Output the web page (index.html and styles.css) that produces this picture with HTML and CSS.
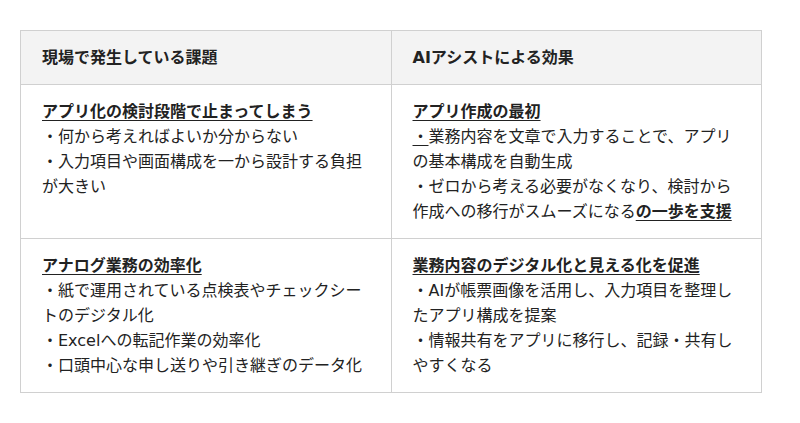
FILE: index.html
```html
<!DOCTYPE html>
<html lang="ja">
<head>
<meta charset="utf-8">
<link rel="stylesheet" href="styles.css">
</head>
<body>
<table class="cmp">
  <thead>
    <tr>
      <th>現場で発生している課題</th>
      <th>AIアシストによる効果</th>
    </tr>
  </thead>
  <tbody>
    <tr>
      <td><u class="ttl">アプリ化の検討段階で止まってしまう</u><br>・何から考えればよいか分からない<br>・入力項目や画面構成を一から設計する負担が大きい</td>
      <td><u class="ttl">アプリ作成の最初</u><br><u>・</u>業務内容を文章で入力することで、アプリの基本構成を自動生成<br>・ゼロから考える必要がなくなり、検討から作成への移行がスムーズになる<u class="ttl">の一歩を支援</u></td>
    </tr>
    <tr>
      <td><u class="ttl">アナログ業務の効率化</u><br>・紙で運用されている点検表やチェックシートのデジタル化<br>・Excelへの転記作業の効率化<br>・口頭中心な申し送りや引き継ぎのデータ化</td>
      <td><u class="ttl">業務内容のデジタル化と見える化を促進</u><br>・AIが帳票画像を活用し、入力項目を整理したアプリ構成を提案<br>・情報共有をアプリに移行し、記録・共有しやすくなる</td>
    </tr>
  </tbody>
</table>
</body>
</html>
```
FILE: styles.css
```css
html, body {
  margin: 0;
  padding: 0;
  background: #fff;
}
body {
  padding: 30px 0 0 20px;
  font-family: "DejaVu Sans", "Noto Sans CJK JP", sans-serif;
  font-size: 16px;
  line-height: 25px;
  color: #222;
}
.cmp {
  border-collapse: collapse;
  width: 742px;
  table-layout: fixed;
}
.cmp th, .cmp td {
  border: 1px solid #d0d0d0;
  text-align: left;
  vertical-align: top;
  width: 50%;
}
.cmp th {
  background: #f3f3f3;
  font-weight: bold;
  padding: 14px 21px 14px 21px;
}
.cmp td {
  padding: 14px 21px 14px 21px;
}
.ttl {
  font-weight: bold;
}
u {
  text-decoration-thickness: 1px;
  text-underline-offset: 3px;
}
```
